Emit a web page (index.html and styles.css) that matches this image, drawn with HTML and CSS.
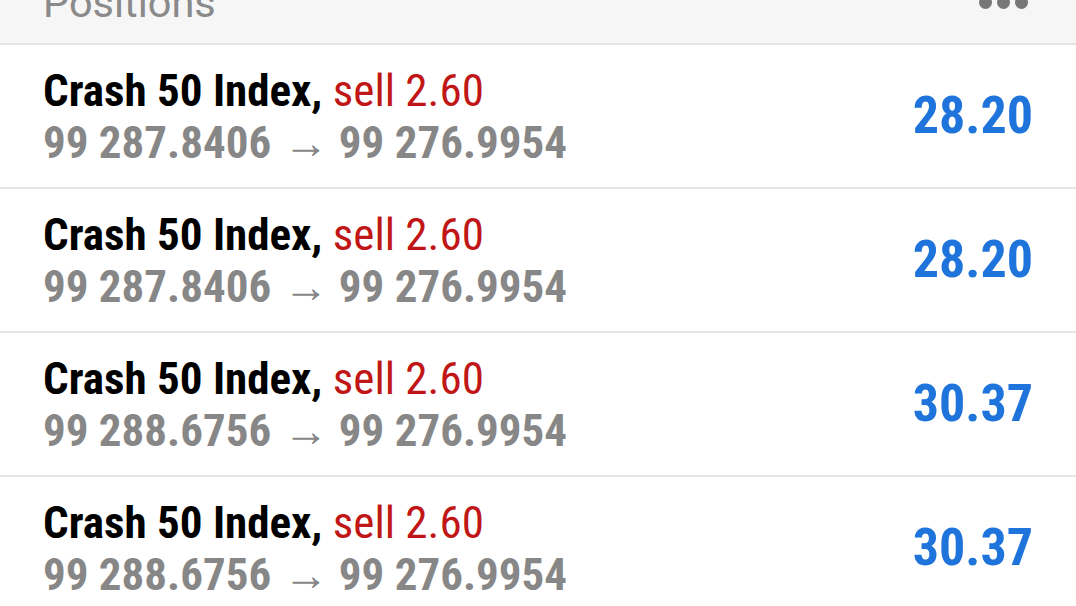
FILE: index.html
```html
<!DOCTYPE html>

<html>
    <head>
        <title>Positions</title>
        <link rel="stylesheet" href="styles.css">
    </head>

    <body>
        <div class="header">
            <h1 class="header-title">Positions</h1>
            <div class="menu-dots">
                <span></span><span></span><span></span>
            </div>
        </div>

        <ul class="positions">
            <li class="position">
                <div class="info">
                    <div class="line-top"><span class="symbol">Crash 50 Index,</span> <span class="type">sell 2.60</span></div>
                    <div class="line-prices">99 287.8406 <span class="arrow">&rarr;</span> 99 276.9954</div>
                </div>
                <div class="profit">28.20</div>
            </li>
            <li class="position">
                <div class="info">
                    <div class="line-top"><span class="symbol">Crash 50 Index,</span> <span class="type">sell 2.60</span></div>
                    <div class="line-prices">99 287.8406 <span class="arrow">&rarr;</span> 99 276.9954</div>
                </div>
                <div class="profit">28.20</div>
            </li>
            <li class="position">
                <div class="info">
                    <div class="line-top"><span class="symbol">Crash 50 Index,</span> <span class="type">sell 2.60</span></div>
                    <div class="line-prices">99 288.6756 <span class="arrow">&rarr;</span> 99 276.9954</div>
                </div>
                <div class="profit">30.37</div>
            </li>
            <li class="position">
                <div class="info">
                    <div class="line-top"><span class="symbol">Crash 50 Index,</span> <span class="type">sell 2.60</span></div>
                    <div class="line-prices">99 288.6756 <span class="arrow">&rarr;</span> 99 276.9954</div>
                </div>
                <div class="profit">30.37</div>
            </li>
        </ul>
    </body>
</html>
```

FILE: styles.css
```css
* {box-sizing: border-box}

body {
  margin: 0;
  background: #fff;
  font-family: Roboto, "Liberation Sans", sans-serif;
  overflow: hidden;
}

/* top bar, scrolled so only the bottom shows */
.header {
  height: 45px;
  background: #f6f6f6;
  border-bottom: 2px solid #e4e4e4;
  display: flex;
  justify-content: space-between;
  padding: 0 43px;
  overflow: hidden;
}

.header-title {
  margin: -17px 0 0 0;
  font-size: 41.5px;
  line-height: 40px;
  font-weight: 400;
  color: #8a8a8a;
}

.menu-dots {
  display: flex;
  gap: 5px;
  margin-top: -4px;
  padding-right: 5px;
}

.menu-dots span {
  width: 13px;
  height: 13px;
  border-radius: 50%;
  background: #777;
}

.positions {
  list-style: none;
  margin: 0;
  padding: 0;
}

.position {
  height: 144px;
  display: flex;
  align-items: center;
  justify-content: space-between;
  padding: 2px 43px 0 43px;
  border-bottom: 2px solid #e6e6e6;
  font-stretch: 75%;
  font-weight: 700;
}

.line-top, .line-prices {
  font-size: 45px;
  line-height: 52px;
  white-space: nowrap;
}

.symbol {
  color: #000;
}

.type {
  color: #c01616;
  font-weight: 400;
}

.line-prices {
  color: #878787;
}

.arrow {
  font-weight: 400;
  margin: 0 0 0 2px;
}

.profit {
  font-size: 52px;
  color: #1e74db;
  margin-top: -3px;
}
```
